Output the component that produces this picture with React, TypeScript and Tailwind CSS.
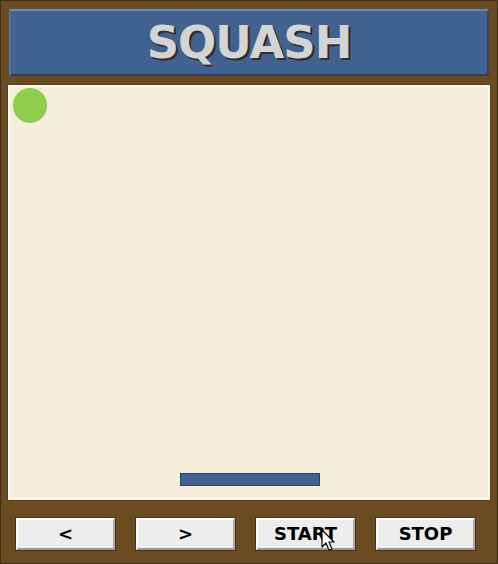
import React from 'react';

const buttons = ['<', '>', 'START', 'STOP'];

const App: React.FC = () => {
  return (
    <div className="relative w-[498px] h-[564px] bg-[#6b4b22] border border-[#3e2d17] flex flex-col px-[7px] pt-[8px] font-['DejaVu_Sans',sans-serif] overflow-hidden">
      {/* Title bar */}
      <div className="mx-[1px] h-[67px] bg-[#41618e] border-t-2 border-l-2 border-t-[#6e88ad] border-l-[#5873a0] border-b-2 border-r-2 border-b-[#2b4266] border-r-[#2f4670] flex items-center justify-center">
        <h1 className="text-[45px] font-bold tracking-[-1px] text-[#d3d4d8] leading-none [text-shadow:2px_2px_0_#3a2a18]">
          SQUASH
        </h1>
      </div>

      {/* Court */}
      <div className="relative mt-[9px] h-[415px] bg-[#f6eedb] border-2 border-[#fffbf0] shadow-[0_0_0_1px_#5a3f1c]">
        <div className="absolute left-[3px] top-[1px] w-[34px] h-[35px] rounded-full bg-[#8dcf4c]" />
        <div className="absolute left-[170px] top-[386px] w-[140px] h-[13px] bg-[#41618e] border border-[#2b3f5e]" />
      </div>

      {/* Controls */}
      <div className="mt-[18px] pl-[8px] flex gap-[21px]">
        {buttons.map((b) => (
          <button
            key={b}
            className="w-[99px] h-[32px] bg-[#ededed] border-t-2 border-l-2 border-t-white border-l-white border-b-2 border-r-2 border-b-[#9a9a9a] border-r-[#a8a8a8] shadow-[0_0_0_1px_#4a3418] text-[18px] font-bold text-black flex items-center justify-center leading-none"
          >
            {b}
          </button>
        ))}
      </div>

      {/* Mouse cursor */}
      <svg className="absolute left-[320px] top-[528px]" width="16" height="24" viewBox="0 0 16 24">
        <path d="M1 1 L1 18 L5 14 L8 21 L11 20 L8 13 L13 13 Z" fill="white" stroke="black" strokeWidth="1.2" strokeLinejoin="round" />
      </svg>
    </div>
  );
};

export default App;
